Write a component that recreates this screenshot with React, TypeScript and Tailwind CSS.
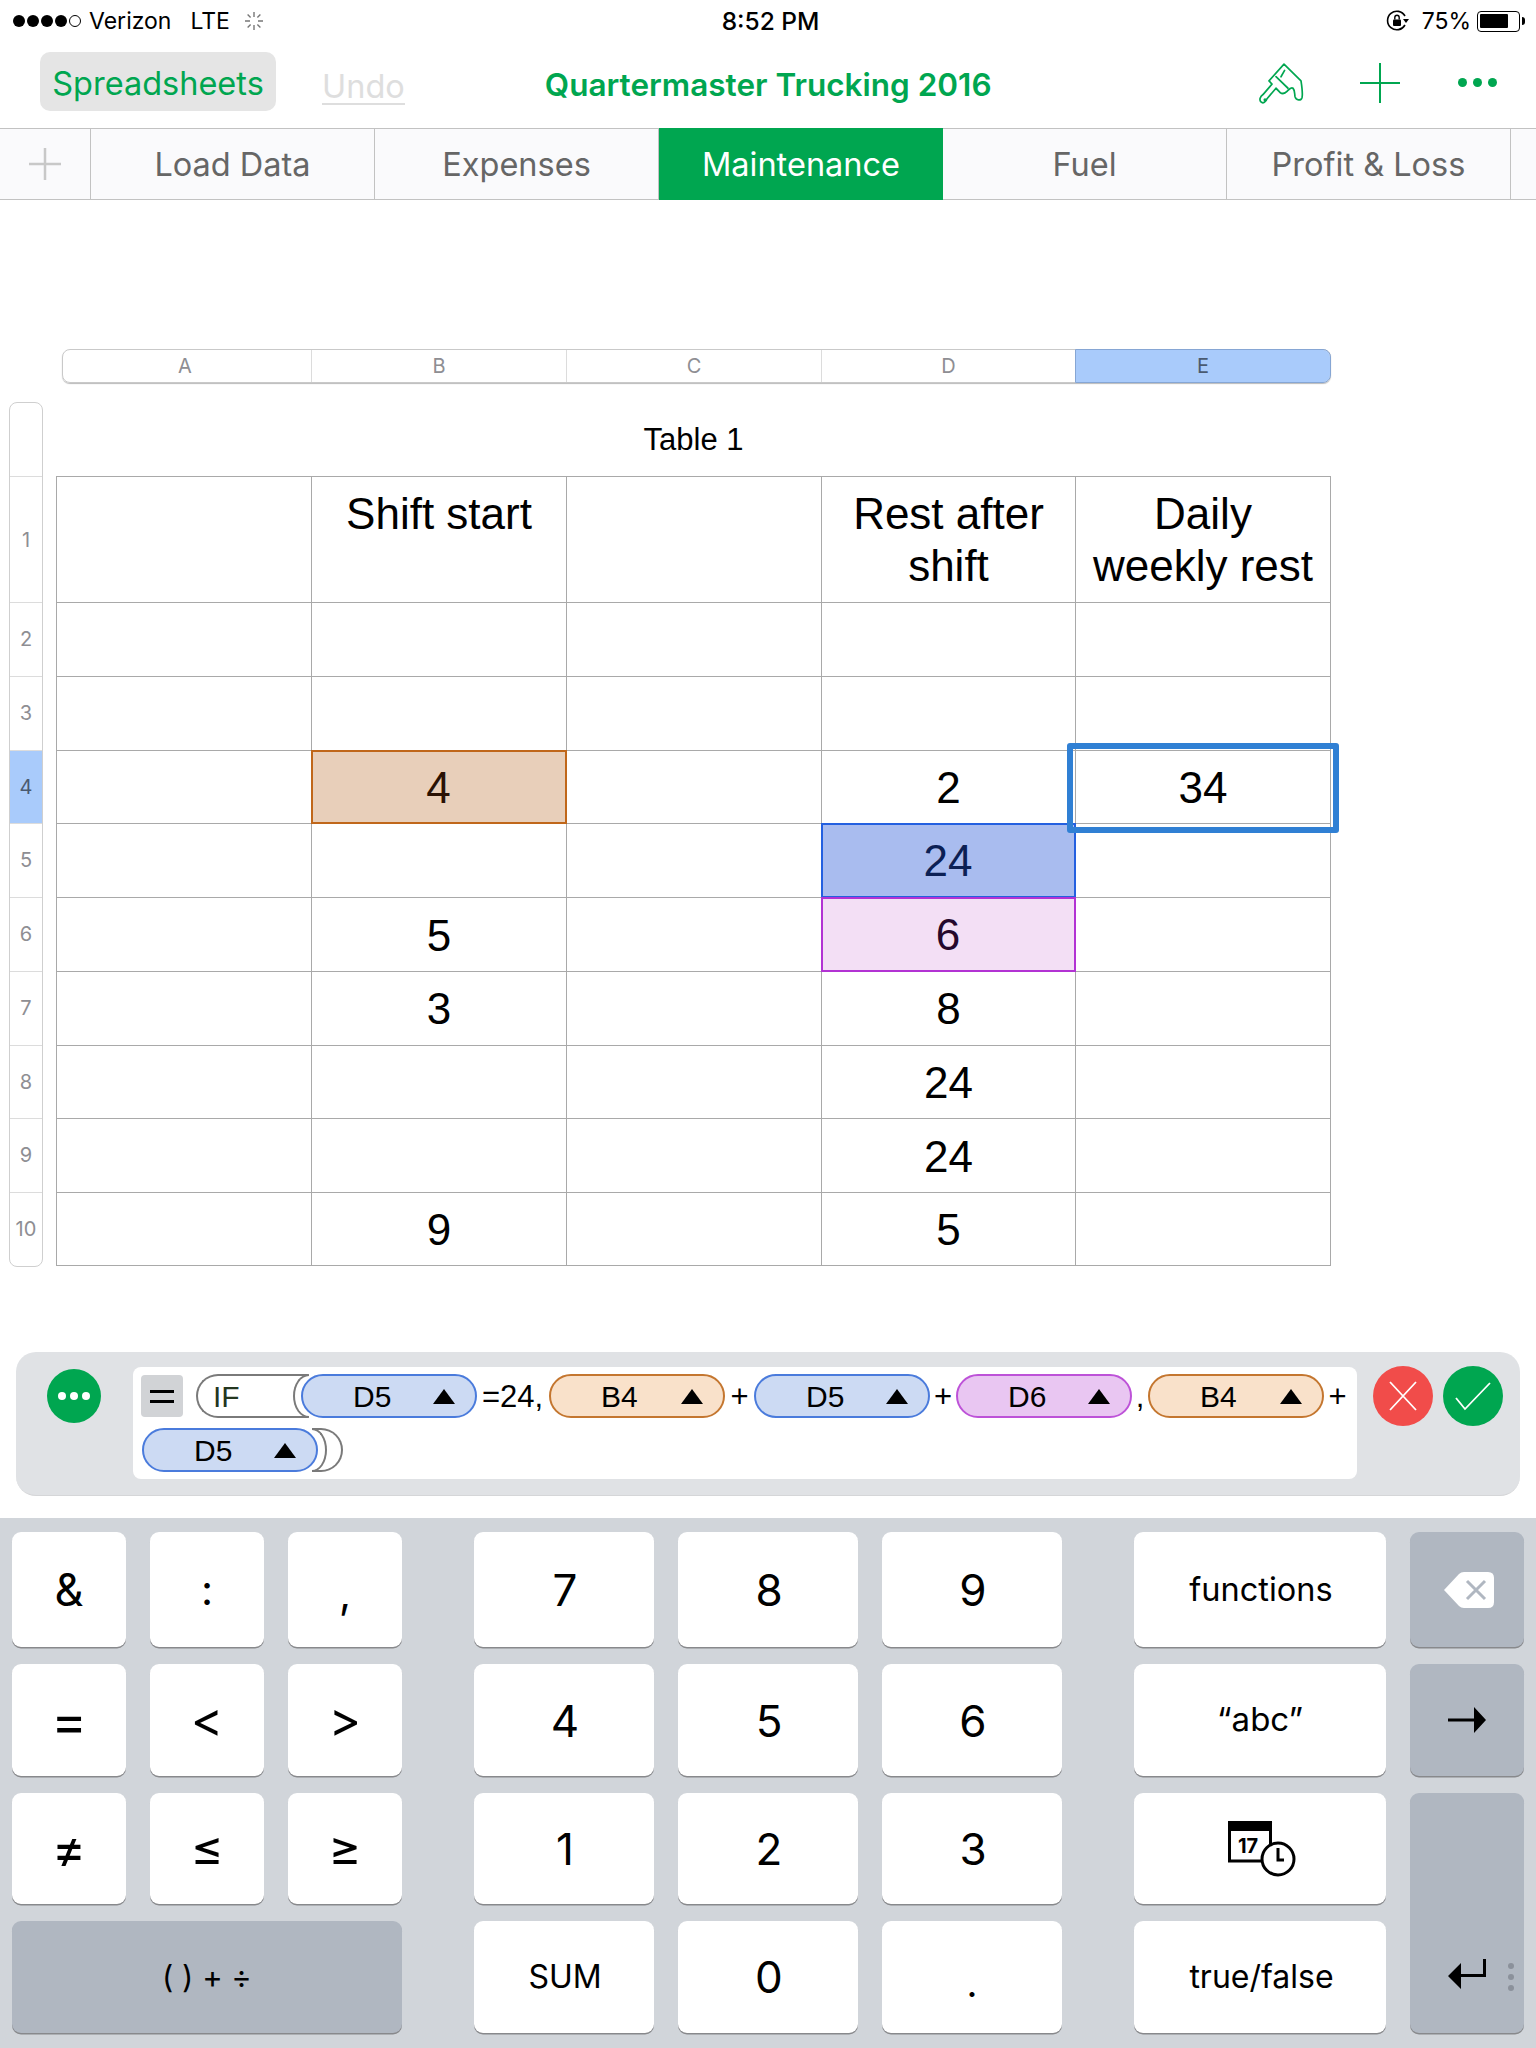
import React from "react";

const green = "#00a650";

function Brush() {
  return (
    <svg width="45" height="42" viewBox="16 12 45 40" preserveAspectRatio="none" fill="none" stroke="#00a650" strokeWidth="1.7" strokeLinejoin="round" strokeLinecap="round">
      <path d="M41 14 L58 30 C59 36 60 42 59 46 C58 49 53 49 52 45 C51.5 42 52 39 50 37 C48 35.5 46 38 44 40 C42 42 40 43 37 41 L33 37 L24 47 C23 50 20 52 18 50 C16 48 17 45 20 43 L29 33 L26 30 Z" />
      <path d="M33 26 L45 37" />
      <path d="M41.6 20 L38 26" />
      <circle cx="22" cy="48" r="0.7" />
    </svg>
  );
}

function Cell({ v, cls = "" }: { v?: React.ReactNode; cls?: string }) {
  return (
    <div className={`flex items-center justify-center text-center border-r border-b border-[#a9a9a9] text-[44px] leading-[52px] text-black ${cls}`}>
      {v}
    </div>
  );
}

const rows: [string, string, string, string, string][] = [
  ["", "", "", "", ""],
  ["", "", "", "", ""],
  ["", "4", "", "2", "34"],
  ["", "", "", "24", ""],
  ["", "5", "", "6", ""],
  ["", "3", "", "8", ""],
  ["", "", "", "24", ""],
  ["", "", "", "24", ""],
  ["", "9", "", "5", ""],
];

const rowHeights = [126, 74, 74, 73, 74, 74, 74, 73, 74, 73];
const raisedRowNumbers = [1, 2, 4, 5, 6, 8, 9];

function Pill({ label, tone, cls = "" }: { label: string; tone: "blue" | "orange" | "purple"; cls?: string }) {
  const t =
    tone === "blue"
      ? "bg-[#ccdaf3] border-[#4a7bdc]"
      : tone === "orange"
        ? "bg-[#f9e1ca] border-[#c4762f]"
        : "bg-[#e9c6f2] border-[#bd52d8]";
  return (
    <div className={`relative z-10 flex h-[44px] w-[176px] shrink-0 items-center rounded-full border-2 ${t} ${cls}`}>
      <span className="ml-[50px] text-[30px] text-black">{label}</span>
      <span className="absolute left-[130px] top-[13px] h-0 w-0 border-x-[11px] border-b-[15px] border-x-transparent border-b-black" />
    </div>
  );
}

function Op({ t, cls = "" }: { t: string; cls?: string }) {
  return <span className={`shrink-0 pt-[2px] text-center text-[31px] text-black ${cls}`}>{t}</span>;
}

function Key({ children, cls = "", dark = false }: { children?: React.ReactNode; cls?: string; dark?: boolean }) {
  return (
    <div
      className={`relative flex items-center justify-center rounded-[9px] text-black shadow-[0_1.5px_0_#88898c] ${dark ? "bg-[#b0b7c1]" : "bg-white"} ${cls}`}
    >
      {children}
    </div>
  );
}

export default function App() {
  return (
    <div className="flex h-[2048px] w-[1536px] flex-col overflow-hidden bg-white font-['Inter',sans-serif]">
      {/* Status bar */}
      <div className="flex h-[40px] items-center justify-between pl-[13px] pr-[11px] pt-[2px] text-[23px] text-black">
        <div className="flex w-[500px] items-center">
          <div className="flex items-center gap-[2px]">
            {[0, 1, 2, 3].map((i) => (
              <span key={i} className="h-[12px] w-[12px] rounded-full bg-black" />
            ))}
            <span className="h-[12px] w-[12px] rounded-full border border-black" />
          </div>
          <span className="ml-[8px]">Verizon</span>
          <span className="ml-[19px]">LTE</span>
          <svg className="ml-[14px]" width="20" height="20" viewBox="0 0 20 20" stroke="#777" strokeWidth="1.4">
            <path d="M10 1v5M10 14v5M1 10h5M14 10h5M3.6 3.6l3 3M13.4 13.4l3 3M3.6 16.4l3-3M13.4 6.6l3-3" />
          </svg>
        </div>
        <div className="ml-[3px] text-[24.5px] font-medium">8:52 PM</div>
        <div className="flex w-[500px] items-center justify-end">
          <svg width="24" height="24" viewBox="0 0 24 24" fill="none">
            <path d="M19 16A9.3 9.3 0 1 1 19 7" stroke="#000" strokeWidth="1.6" />
            <path d="M17 10h6l-3 4z" fill="#000" />
            <rect x="7" y="10.5" width="8" height="6.5" rx="1" fill="#000" />
            <path d="M8.8 10.5V8.5a2.2 2.2 0 0 1 4.4 0v2" stroke="#000" strokeWidth="1.4" />
          </svg>
          <span className="ml-[12px]">75%</span>
          <div className="ml-[6px] flex h-[21px] w-[43px] items-center rounded-[4px] border border-black px-[2px] py-[2.5px]">
            <div className="h-full w-[28px] rounded-[1px] bg-black" />
          </div>
          <div className="ml-[2px] h-[8px] w-[3px] rounded-r-full bg-black" />
        </div>
      </div>

      {/* Nav */}
      <div className="relative flex h-[88px] items-start">
        <div className="ml-[40px] mt-[12px] flex h-[59px] w-[236px] items-center justify-center rounded-[10px] bg-[#e5e5e5] pt-[6px] text-[32.5px] text-[#00a650]">
          Spreadsheets
        </div>
        <div className="ml-[46px] mt-[31px] border-b-2 border-[#dedede] text-[32.5px] leading-[32px] text-[#dedede]">Undo</div>
        <div className="ml-[140px] mt-[25px] text-[31.5px] font-semibold leading-[40px]" style={{ color: green }}>
          Quartermaster Trucking 2016
        </div>
        <div className="ml-auto flex items-center pr-[39px] pt-[22px]">
          <Brush />
          <svg className="ml-[56px]" width="40" height="40" viewBox="0 0 40 40" stroke="#00a650" strokeWidth="2">
            <path d="M20 0v40M0 20h40" />
          </svg>
          <div className="ml-[58px] -mt-[2px] flex gap-[6px]">
            {[0, 1, 2].map((i) => (
              <span key={i} className="h-[9px] w-[9px] rounded-full bg-[#00a650]" />
            ))}
          </div>
        </div>
      </div>

      {/* Tabs */}
      <div className="flex h-[72px] border-y border-[#c2c2c2] bg-[#fafafc] text-[32.5px] text-[#666]">
        <div className="flex w-[91px] shrink-0 items-center justify-center border-r border-[#c2c2c2]">
          <svg width="32" height="32" viewBox="0 0 32 32" stroke="#c8c8c8" strokeWidth="2.5">
            <path d="M16 0v32M0 16h32" />
          </svg>
        </div>
        {["Load Data", "Expenses", "Maintenance", "Fuel", "Profit & Loss"].map((t) => (
          <div
            key={t}
            className={`flex w-[284px] shrink-0 items-center justify-center pt-[2px] ${
              t === "Maintenance" ? "-my-px bg-[#00a650] text-white" : "border-r border-[#c2c2c2]"
            }`}
          >
            {t}
          </div>
        ))}
      </div>

      {/* Sheet */}
      <div className="h-[149px] shrink-0" />
      <div className="ml-[62px] grid h-[34px] w-[1269px] shrink-0 grid-cols-[249px_255px_255px_254px_254px] rounded-[8px] border border-[#c9c9c9] text-[20px] text-[#8e8e93] shadow-[0_1px_1px_#bbb]">
        {["A", "B", "C", "D", "E"].map((c) => (
          <div
            key={c}
            className={`flex items-center justify-center ${c === "E" ? "rounded-r-[7px] bg-[#a9cbfb] text-[#4a5a70] outline outline-1 outline-[#86a6d4]" : "border-r border-[#dcdcdc]"} ${c === "A" ? "pr-[4px]" : ""}`}
          >
            {c}
          </div>
        ))}
      </div>

      <div className="mt-[19px] flex shrink-0 items-start">
        {/* Row headers */}
        <div className="ml-[9px] flex w-[34px] shrink-0 flex-col overflow-hidden rounded-[8px] border border-[#cfcfcf] text-[20px] text-[#8e8e93]">
          <div className="h-[74px] border-b border-[#dcdcdc]" />
          {rowHeights.map((h, i) => (
            <div
              key={i}
              className={`flex items-center justify-center ${i < 9 ? "border-b border-[#dcdcdc]" : ""} ${i === 3 ? "bg-[#a9cbfb] text-[#4a5a70]" : ""} ${raisedRowNumbers.includes(i) ? "pb-[2px]" : ""}`}
              style={{ height: h }}
            >
              {i + 1}
            </div>
          ))}
        </div>

        {/* Table */}
        <div className="ml-[13px] flex w-[1275px] shrink-0 flex-col font-['Liberation_Sans',sans-serif]">
          <div className="flex h-[74px] items-center justify-center pt-[2px] text-[31px] text-black">Table 1</div>
          <div className="relative grid w-[1275px] grid-cols-[255px_255px_255px_254px_255px] border-l border-t border-[#a9a9a9]">
            <Cell cls="h-[126px]" />
            <Cell cls="h-[126px] !items-start pt-[11px]" v="Shift start" />
            <Cell cls="h-[126px]" />
            <Cell cls="h-[126px] !items-start pt-[11px]" v={<>Rest after<br />shift</>} />
            <Cell cls="h-[126px] !items-start pt-[11px]" v={<>Daily<br />weekly rest</>} />
            {rows.map((r, i) =>
              r.map((v, j) => {
                let cls = i === 3 || i === 5 || i === 6 ? "pt-[1px]" : "pt-[2px]";
                if (i === 2 && j === 1) cls += " relative z-[1] -ml-px -mt-px !h-[74px] bg-[#e8cfba] outline-2 -outline-offset-2 outline-[#c0671a] !text-[#2a1204]";
                if (i === 3 && j === 3) cls += " relative z-[1] -ml-px -mt-px !h-[75px] bg-[#a9bcef] outline-2 -outline-offset-2 outline-[#2460e0] !text-[#0c2054]";
                if (i === 4 && j === 3) cls += " relative z-[1] -ml-px -mt-px !h-[75px] bg-[#f3dff5] outline-2 -outline-offset-2 outline-[#b233d3] !text-[#25082c]";
                return <Cell key={`${i}-${j}`} v={v} cls={`${rowHeights[i + 1] === 73 ? "h-[73px]" : "h-[74px]"} ${cls}`} />;
              })
            )}
            <div className="absolute left-[1010px] top-[266px] z-[2] h-[90px] w-[272px] rounded-[3px] border-[6px] border-[#3080d4]" />
          </div>
        </div>
      </div>

      {/* Formula bar */}
      <div className="ml-[16px] mt-[85px] flex h-[144px] w-[1504px] shrink-0 rounded-[20px] border-b border-[#d5d6d8] bg-[#e0e2e5]">
        <div className="ml-[31px] mt-[17px] flex h-[54px] w-[54px] shrink-0 items-center justify-center gap-[4px] rounded-full bg-[#00a650]">
          {[0, 1, 2].map((i) => (
            <span key={i} className="h-[8px] w-[8px] rounded-full bg-white" />
          ))}
        </div>
        <div className="ml-[32px] mt-[15px] h-[112px] w-[1224px] shrink-0 rounded-[8px] bg-white pl-[8px] pt-[7px] font-['Liberation_Sans',sans-serif]">
          <div className="flex h-[44px] items-center">
            <div className="flex h-[42px] w-[42px] shrink-0 flex-col items-center justify-center gap-[7px] rounded-[4px] bg-[#d1d3d6]">
              <span className="h-[3px] w-[24px] bg-black" />
              <span className="h-[3px] w-[24px] bg-black" />
            </div>
            <div className="ml-[13px] flex h-[44px] w-[112px] shrink-0 items-center rounded-l-full border-2 border-r-0 border-[#7a7a7a] pl-[15px] text-[30px] text-[#24361f]">
              IF
            </div>
            <div className="-ml-[15px] h-[44px] w-[16px] shrink-0 rounded-l-[16px_22px] border-2 border-r-0 border-[#7a7a7a] bg-white" />
            <Pill tone="blue" label="D5" cls="-ml-[8px]" />
            <Op t="=24," cls="ml-[5px] w-[67px] text-left" />
            <Pill tone="orange" label="B4" />
            <Op t="+" cls="w-[29px]" />
            <Pill tone="blue" label="D5" />
            <Op t="+" cls="w-[26px]" />
            <Pill tone="purple" label="D6" />
            <Op t="," cls="w-[16px]" />
            <Pill tone="orange" label="B4" />
            <Op t="+" cls="w-[27px]" />
          </div>
          <div className="mt-[10px] flex h-[44px] items-center">
            <Pill tone="blue" label="D5" cls="ml-[1px]" />
            <div className="relative z-[1] -ml-[6px] h-[44px] w-[15px] shrink-0 rounded-r-[15px_22px] border-2 border-l-0 border-[#7a7a7a] bg-white" />
            <div className="-ml-[15px] h-[44px] w-[31px] shrink-0 rounded-r-[22px] border-2 border-l-0 border-[#7a7a7a]" />
          </div>
        </div>
        <div className="ml-[16px] mt-[14px] flex h-[60px] w-[60px] shrink-0 items-center justify-center rounded-full bg-[#f14c4a]">
          <svg width="30" height="30" viewBox="0 0 30 30" stroke="#fff" strokeWidth="1.8">
            <path d="M2 1l26 28M28 1L2 29" />
          </svg>
        </div>
        <div className="ml-[10px] mt-[14px] flex h-[60px] w-[60px] shrink-0 items-center justify-center rounded-full bg-[#00a650]">
          <svg width="40" height="30" viewBox="0 0 40 30" fill="none" stroke="#fff" strokeWidth="1.8">
            <path d="M3 17l9 11L37 2" />
          </svg>
        </div>
      </div>

      {/* Keyboard */}
      <div className="mt-[22px] grid flex-1 grid-cols-[114px_114px_114px_24px_180px_180px_180px_24px_252px_114px] grid-rows-[115px_112px_111px_112px] gap-x-[24px] gap-y-[17px] bg-[#d1d5da] px-[12px] pt-[14px] font-['Inter',sans-serif]">
        <Key cls="text-[45px] col-start-1 row-start-1">&amp;</Key>
        <Key cls="text-[42px] col-start-2 row-start-1">:</Key>
        <Key cls="text-[42px] col-start-3 row-start-1"><span className="mt-[6px]">,</span></Key>
        <Key cls="pl-[2px] text-[44px] col-start-5 row-start-1">7</Key>
        <Key cls="pl-[2px] text-[44px] col-start-6 row-start-1">8</Key>
        <Key cls="pl-[2px] text-[44px] col-start-7 row-start-1">9</Key>
        <Key cls="pl-[2px] pt-[2px] text-[32.5px] col-start-9 row-start-1">functions</Key>
        <Key dark cls="col-start-10 row-start-1">
          <svg className="ml-[3px]" width="50" height="36" viewBox="0 0 50 36">
            <path d="M0 18 L15 2 Q17 0 20 0 H44 Q50 0 50 6 V30 Q50 36 44 36 H20 Q17 36 15 34 Z" fill="#fff" />
            <path d="M23 9l18 18M41 9L23 27" stroke="#b0b7c1" strokeWidth="3" />
          </svg>
        </Key>

        <Key cls="text-[54px] col-start-1 row-start-2">=</Key>
        <Key cls="text-[49px] col-start-2 row-start-2">&lt;</Key>
        <Key cls="text-[49px] col-start-3 row-start-2">&gt;</Key>
        <Key cls="pl-[2px] pt-[2px] text-[44px] col-start-5 row-start-2">4</Key>
        <Key cls="pl-[2px] pt-[2px] text-[44px] col-start-6 row-start-2">5</Key>
        <Key cls="pl-[2px] pt-[2px] text-[44px] col-start-7 row-start-2">6</Key>
        <Key cls="text-[33px] col-start-9 row-start-2">“abc”</Key>
        <Key dark cls="col-start-10 row-start-2">
          <svg width="38" height="26" viewBox="0 0 38 26">
            <path d="M0 11.5h26V0l12 13-12 13V14.5H0z" fill="#000" />
          </svg>
        </Key>

        <Key cls="text-[52px] col-start-1 row-start-3">≠</Key>
        <Key cls="text-[50px] col-start-2 row-start-3">≤</Key>
        <Key cls="text-[50px] col-start-3 row-start-3">≥</Key>
        <Key cls="pl-[2px] text-[44px] col-start-5 row-start-3">1</Key>
        <Key cls="pl-[2px] text-[44px] col-start-6 row-start-3">2</Key>
        <Key cls="pl-[2px] text-[44px] col-start-7 row-start-3">3</Key>
        <Key cls="col-start-9 row-start-3">
          <svg className="ml-[4px]" width="68" height="56" viewBox="0 0 68 56">
            <rect x="1.5" y="1.5" width="41" height="38.5" fill="#fff" stroke="#000" strokeWidth="3" />
            <rect x="0" y="0" width="44" height="10" rx="1.5" fill="#000" />
            <text x="10" y="32" fontSize="20" fontWeight="700" fontFamily="Inter, sans-serif" fill="#000">17</text>
            <circle cx="50" cy="38" r="16" fill="#fff" stroke="#000" strokeWidth="3" />
            <path d="M50 27v12h6" fill="none" stroke="#000" strokeWidth="3" />
          </svg>
        </Key>

        <Key dark cls="col-start-10 row-start-3 row-span-2 !items-end pb-[44px]">
          <svg width="38" height="30" viewBox="0 0 38 30">
            <path d="M38 0v18H13v12L0 17 13 4v11h22V0z" fill="#000" />
          </svg>
          <div className="absolute bottom-[42px] right-[10px] flex flex-col gap-[5px]">
            {[0, 1, 2].map((i) => (
              <span key={i} className="h-[6px] w-[6px] rounded-full bg-[#8b919b]" />
            ))}
          </div>
        </Key>

        <Key dark cls="col-span-3 col-start-1 row-start-4 text-[31px]">( ) + ÷</Key>
        <Key cls="pl-[2px] text-[32px] col-start-5 row-start-4">SUM</Key>
        <Key cls="pl-[2px] text-[44px] col-start-6 row-start-4">0</Key>
        <Key cls="text-[38px] col-start-7 row-start-4"><span className="mt-[12px]">.</span></Key>
        <Key cls="pl-[3px] text-[32px] col-start-9 row-start-4">true/false</Key>
      </div>
    </div>
  );
}
